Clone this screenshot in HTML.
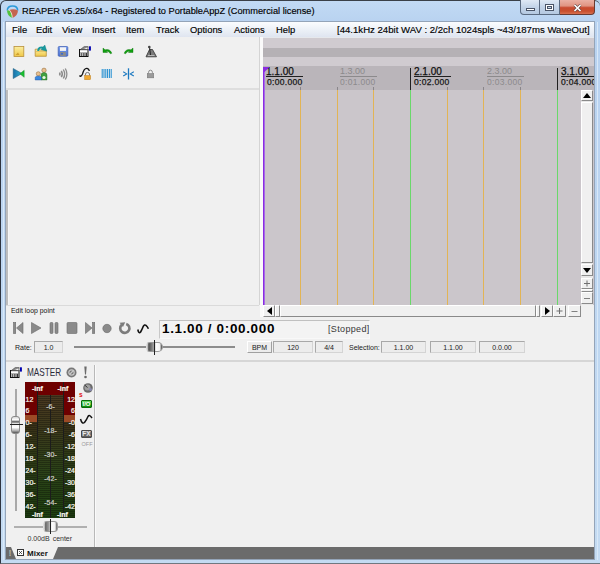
<!DOCTYPE html>
<html><head><meta charset="utf-8">
<style>
*{margin:0;padding:0;box-sizing:border-box}
html,body{width:600px;height:564px;overflow:hidden;background:#b9d1ea;font-family:"Liberation Sans",sans-serif}
.a{position:absolute}
#frame{left:0;top:0;width:600px;height:564px;background:linear-gradient(#c2daf4,#b8d2f0 22px,#c4dbf2);border-left:1px solid #2e3440;border-top:1px solid #3a4048;border-bottom:1px solid #707880;border-radius:6px 6px 0 0}
#ib{left:5px;top:21px;width:590px;height:539px;border:1px solid #94a4b8}
#title{left:22px;top:6px;font-size:9.25px;color:#000;white-space:nowrap;-webkit-text-stroke:0.15px #000}
#menu{left:6px;top:22px;width:588px;height:16px;background:linear-gradient(#fbfcfe,#eef2f8 45%,#dfe5f0);border-bottom:1px solid #e6e8ec}
.mi{position:absolute;top:2px;font-size:9.4px;color:#000;white-space:nowrap;-webkit-text-stroke:0.15px #000}
#status{left:335px;top:22px;width:259px;height:15px}
#tcp{left:6px;top:37px;width:253px;height:268px;background:#f0f0f0}
#arr{left:263px;top:38px;width:331px;height:267px;background:#cbc6cb;overflow:hidden}
.band{position:absolute;left:0;width:331px}
.vl{position:absolute;width:1px}
.rl{position:absolute;font-size:9px;white-space:nowrap;line-height:9px}
.btn{background:#f0f0f0;border-top:1px solid #fff;border-left:1px solid #fff;border-right:1px solid #8a8a8a;border-bottom:1px solid #8a8a8a}
.pm{font-size:10px;line-height:11px;text-align:center;color:#6a6a6a}
.box{border:1px solid #d4d4d4;border-top-color:#a8a8a8;border-left-color:#a8a8a8;background:#ececec;font-size:7px;line-height:11px;text-align:center;color:#202020}
.btn2{border:1px solid #a0a0a0;border-top-color:#fff;border-left-color:#fff;background:#ececec;font-size:7px;line-height:11px;text-align:center;color:#202020}
.ml{position:absolute;font-size:7px;line-height:9px;color:#f8f8f0;white-space:nowrap;-webkit-text-stroke:0.2px #f8f8f0}
.mc{color:#d0d0c8;-webkit-text-stroke:0.2px #d0d0c8}
</style></head><body>
<div id="frame" class="a"></div><div class="a" style="left:3px;top:22px;width:1px;height:538px;background:#d8e8f8"></div><div class="a" style="left:597px;top:22px;width:1px;height:538px;background:#d8e8f8"></div><div id="ib" class="a"></div>
<!-- title bar -->
<svg class="a" style="left:6px;top:4.5px" width="13" height="13" viewBox="0 0 13 13">
 <path d="M1.4 5.6 C1.4 2.3 4 1 6.5 1 C9 1 11.6 2.3 11.6 5.6" stroke="#2c9ad8" stroke-width="1.7" fill="none"/>
 <path d="M1.1 5.4 C1.1 9.6 3.8 12 6.3 12.7 C6 9 5 6.6 3.2 4.9z" fill="#52c23c"/>
 <path d="M3.2 4.9 C6 3.9 9.5 4.1 11.9 5.4 C11.9 9.6 9 12 6.3 12.7 C6 9 5 6.6 3.2 4.9z" fill="#c46450"/>
 <path d="M2.2 5.1 Q2.8 4.8 3.2 4.9 C5 6.6 6 9 6.3 12.5" stroke="#f2eee2" stroke-width="0.8" fill="none"/>
</svg>
<div id="title" class="a">REAPER v5.25/x64 - Registered to PortableAppZ (Commercial license)</div>
<div class="a" style="left:520px;top:0;width:20px;height:15px;border:1px solid #5a6a80;border-top:none;border-radius:0 0 0 4px;background:linear-gradient(#dfe9f5,#c3d4e8 50%,#b5c9e1)"></div>
<div class="a" style="left:526px;top:8px;width:9px;height:3px;background:#fff;border:1px solid #4a5568"></div>
<div class="a" style="left:540px;top:0;width:20px;height:15px;border:1px solid #5a6a80;border-top:none;border-left:none;background:linear-gradient(#dfe9f5,#c3d4e8 50%,#b5c9e1)"></div>
<div class="a" style="left:545px;top:4px;width:9px;height:7px;background:#fff;border:1px solid #4a5568"></div>
<div class="a" style="left:547px;top:6px;width:5px;height:3px;background:#c9d7e8;border:1px solid #4a5568"></div>
<div class="a" style="left:560px;top:0;width:35px;height:15px;border:1px solid #6a3a30;border-top:none;border-left:none;border-radius:0 0 4px 0;background:linear-gradient(#eab0a4,#e09482 42%,#c84a30 55%,#c8502e 80%,#d87050)"></div>
<svg class="a" style="left:572px;top:3px" width="11" height="9" viewBox="0 0 11 9"><path d="M2.5 2 L8.5 8 M8.5 2 L2.5 8" stroke="#5a4040" stroke-width="2.8"/><path d="M2.5 2 L8.5 8 M8.5 2 L2.5 8" stroke="#fff" stroke-width="1.7"/></svg>
<!-- menu -->
<div id="menu" class="a">
<span class="mi" style="left:6px">File</span>
<span class="mi" style="left:30px">Edit</span>
<span class="mi" style="left:56px">View</span>
<span class="mi" style="left:86px">Insert</span>
<span class="mi" style="left:120px">Item</span>
<span class="mi" style="left:150px">Track</span>
<span class="mi" style="left:184px">Options</span>
<span class="mi" style="left:228px">Actions</span>
<span class="mi" style="left:270px">Help</span>
</div>
<div id="status" class="a"><span class="mi" style="left:2px;font-size:9.6px">[44.1kHz 24bit WAV : 2/2ch 1024spls ~43/187ms WaveOut]</span></div>
<!-- TCP -->
<div id="tcp" class="a"></div>
<div class="a" style="left:6px;top:88px;width:253px;height:2px;background:#dedede"></div>
<div class="a" style="left:6px;top:90px;width:2px;height:215px;background:#bdbdbd"></div><div class="a" style="left:8px;top:90px;width:1px;height:215px;background:#f6f6f6"></div>
<div class="a" style="left:259px;top:37px;width:1px;height:268px;background:#d4d4d4"></div>
<div class="a" style="left:260px;top:37px;width:3px;height:268px;background:#fafafa"></div>

<!-- toolbar icons -->
<svg class="a" style="left:0;top:0" width="260" height="90" viewBox="0 0 260 90">
 <defs>
  <linearGradient id="gy" x1="0" y1="0" x2="0" y2="1"><stop offset="0" stop-color="#fbeea0"/><stop offset="1" stop-color="#f0c848"/></linearGradient>
  <linearGradient id="gb" x1="0" y1="0" x2="0" y2="1"><stop offset="0" stop-color="#7aa0f0"/><stop offset="1" stop-color="#4a70d0"/></linearGradient>
  <linearGradient id="gt" x1="0" y1="0" x2="1" y2="0"><stop offset="0" stop-color="#1a70a8"/><stop offset="1" stop-color="#30b0d0"/></linearGradient>
 </defs>
 <!-- new -->
 <rect x="14" y="46.5" width="9.8" height="10" fill="url(#gy)" stroke="#b8903a" stroke-width="0.8"/>
 <path d="M15.5 55 L18 52.5 L19.5 55z" fill="#d0a030"/>
 <!-- open -->
 <path d="M35.2 49.2 H39 L40 50 H46.3 V56.3 H35.2z" fill="url(#gy)" stroke="#b8903a" stroke-width="0.8"/>
 <path d="M35.5 51.5 H46" stroke="#d8b050" stroke-width="0.6"/>
 <path d="M38.2 51 Q38.4 46.2 43.4 47.8" stroke="#189a9e" stroke-width="2" fill="none"/><path d="M44.8 45 L46.8 51.2 L41 49.6z" fill="#189a9e" stroke="#0e7a80" stroke-width="0.4"/>
 <!-- save -->
 <rect x="58.2" y="46.5" width="9.6" height="9.8" rx="1" fill="url(#gb)" stroke="#3a5ab0" stroke-width="0.7"/>
 <rect x="60" y="47.3" width="6" height="3.6" fill="#f4f4f4"/>
 <rect x="60.2" y="52" width="5.6" height="4" fill="#8a8a8a"/>
 <rect x="61" y="53" width="2" height="1.6" fill="#3a6ad0"/>
 <!-- project settings -->
 <g transform="translate(77,45)">
 <rect x="2.5" y="4.5" width="8.5" height="7" fill="#fff" stroke="#111" stroke-width="1"/>
 <path d="M3 4.8 L7.2 1.6 H11.2 L10.8 4.8z" fill="#8a8a8a" stroke="#444" stroke-width="0.6"/>
 <path d="M7 3.6 L10.5 2.6 L10.4 4.2z" fill="#f0f0f0"/>
 <path d="M4.2 8 V11 M6.2 8 V11 M8 8 V11 M9.6 8 V11" stroke="#222" stroke-width="1"/>
 <path d="M3 7.6 H10.5" stroke="#555" stroke-width="0.5"/>
 <rect x="12" y="1.3" width="1.9" height="4.3" fill="#0000b0"/>
 </g>
 <!-- undo -->
 <path d="M103 48 V52.5 H107.5 L106 51 Q108.5 50.8 110.5 53.8 L111.8 53.2 Q110 48.5 105 49.8z" fill="#10a010" stroke="#087008" stroke-width="0.4"/>
 <!-- redo -->
 <path d="M133 48 V52.5 H128.5 L130 51 Q127.5 50.8 125.5 53.8 L124.2 53.2 Q126 48.5 131 49.8z" fill="#10a010" stroke="#087008" stroke-width="0.4"/>
 <!-- metronome -->
 <path d="M146 56.8 L149.5 49.5 H152.5 L156.5 56.8z" fill="#7a7a7a" stroke="#333" stroke-width="0.8"/>
 <path d="M150.5 55 L149.5 47" stroke="#222" stroke-width="1"/>
 <circle cx="149.3" cy="47" r="1.3" fill="#444"/>
 <path d="M148 55.5 H154.5" stroke="#c8c8c8" stroke-width="0.8"/>
 <!-- bowtie -->
 <path d="M13.2 68.5 L22 73.5 L13.2 78.6z" fill="url(#gt)" stroke="#1a5a7a" stroke-width="0.5"/>
 <path d="M24.2 70.3 V77.3 L19.8 73.8z" fill="#18c030" stroke="#0a7a1a" stroke-width="0.4"/>
 <!-- people -->
 <circle cx="44" cy="70.3" r="2.2" fill="#e8c090" stroke="#8a6030" stroke-width="0.5"/>
 <path d="M41 80 V75 Q41 72.5 44 72.5 Q47 72.5 47 75 V80z" fill="#40a040" stroke="#206020" stroke-width="0.4"/>
 <circle cx="44" cy="77.5" r="1.6" fill="#e8f8e0"/>
 <circle cx="38.3" cy="73.8" r="2.1" fill="#e8c090" stroke="#8a6030" stroke-width="0.5"/>
 <path d="M35.2 80 V77.6 Q35.2 76 38.3 76 Q41.4 76 41.4 77.6 V80z" fill="#3a88e0" stroke="#1a4a90" stroke-width="0.4"/>
 <!-- speaker arcs -->
 <g fill="none" stroke="#8c8c8c">
  <path d="M59.5 72.5 Q60.5 74 59.5 75.5" stroke-width="1.6"/>
  <path d="M61.3 70.8 Q63.3 74 61.3 77.2" stroke-width="1.5"/>
  <path d="M63.3 69.5 Q66 74 63.3 78.5" stroke-width="1.4"/>
  <path d="M65.3 68.5 Q68.5 74 65.3 79.5" stroke-width="1.3"/>
 </g>
 <!-- envelope lock -->
 <path d="M79.5 75.5 Q81 77.5 82.5 74 Q84 68 87 68.3 Q89 68.8 89.3 71" stroke="#111" stroke-width="1.3" fill="none"/>
 <path d="M85.5 75.5 V74 Q85.5 72.5 87.5 72.5 Q89.5 72.5 89.5 74 V75.5" stroke="#7a7a7a" stroke-width="1" fill="none"/>
 <rect x="84.6" y="75.5" width="6" height="4.2" fill="#f0a830" stroke="#b07010" stroke-width="0.4"/>
 <!-- grid -->
 <g stroke="#1a8ad0" stroke-width="1">
  <path d="M102.2 69 V78 M104 69 V78 M105.8 69 V78 M107.6 69 V78 M109.4 69 V78 M111.2 69 V78"/>
 </g>
 <!-- ripple -->
 <path d="M128.5 68.3 V79.5" stroke="#1a78c0" stroke-width="1.3"/>
 <path d="M123.2 71.8 L126.7 73.9 L123.2 76" stroke="#1a78c0" stroke-width="1.1" fill="none"/>
 <path d="M133.8 71.8 L130.3 73.9 L133.8 76" stroke="#1a78c0" stroke-width="1.1" fill="none"/>
 <!-- lock gray -->
 <path d="M148.6 73.5 V72.3 Q148.6 70.2 150.5 70.2 Q152.4 70.2 152.4 72.3 V73.5" stroke="#8a8a8a" stroke-width="1" fill="none"/>
 <rect x="147.2" y="73.5" width="6.6" height="4.4" fill="#9a9a9a" stroke="#6a6a6a" stroke-width="0.4"/>
</svg>
<!-- arrange -->
<div id="arr" class="a">
 <div class="band" style="top:0;height:10px;background:#d0cbd0"></div>
 <div class="band" style="top:10px;height:9px;background:#b5b1b5"></div>
 <div class="band" style="top:19px;height:9px;background:#d0cbd0"></div>
 <div class="band" style="top:28px;height:24px;background:#bab5ba"></div>
 <div class="vl" style="left:37px;top:52px;height:215px;background:#e2b455"></div>
 <div class="vl" style="left:74px;top:52px;height:215px;background:#e2b455"></div>
 <div class="vl" style="left:110px;top:52px;height:215px;background:#e2b455"></div>
 <div class="vl" style="left:147px;top:30px;height:22px;background:#202020"></div>
 <div class="vl" style="left:147px;top:52px;height:215px;background:#6ad86a"></div>
 <div class="vl" style="left:184px;top:52px;height:215px;background:#e2b455"></div>
 <div class="vl" style="left:220px;top:52px;height:215px;background:#e2b455"></div>
 <div class="vl" style="left:257px;top:52px;height:215px;background:#e2b455"></div>
 <div class="vl" style="left:294px;top:30px;height:22px;background:#202020"></div>
 <div class="vl" style="left:294px;top:52px;height:215px;background:#6ad86a"></div>
<div class="vl" style="left:37px;top:49px;height:3px;background:#8a868a"></div><div class="vl" style="left:74px;top:49px;height:3px;background:#8a868a"></div><div class="vl" style="left:110px;top:49px;height:3px;background:#8a868a"></div><div class="vl" style="left:184px;top:49px;height:3px;background:#8a868a"></div><div class="vl" style="left:220px;top:49px;height:3px;background:#8a868a"></div><div class="vl" style="left:257px;top:49px;height:3px;background:#8a868a"></div>
 <!-- labels -->
 <div class="rl" style="left:3px;top:29px;font-size:10px;color:#101010;-webkit-text-stroke:0.25px #101010">1.1.00</div>
 <div class="a" style="left:3px;top:38px;width:37px;height:1px;background:#202020"></div>
 <div class="rl" style="left:4px;top:40px;font-size:8.5px;color:#181818;letter-spacing:0.3px;-webkit-text-stroke:0.25px #181818">0:00.000</div>
 <div class="rl" style="left:77px;top:29px;color:#8c8a8c">1.3.00</div>
 <div class="a" style="left:77px;top:38px;width:37px;height:1px;background:#8c8a8c"></div>
 <div class="rl" style="left:77px;top:40px;font-size:8.5px;color:#8c8a8c;letter-spacing:0.3px">0:01.000</div>
 <div class="rl" style="left:151px;top:29px;font-size:10px;color:#101010;-webkit-text-stroke:0.25px #101010">2.1.00</div>
 <div class="a" style="left:151px;top:38px;width:37px;height:1px;background:#202020"></div>
 <div class="rl" style="left:151px;top:40px;font-size:8.5px;color:#181818;letter-spacing:0.3px;-webkit-text-stroke:0.25px #181818">0:02.000</div>
 <div class="rl" style="left:224px;top:29px;color:#8c8a8c">2.3.00</div>
 <div class="a" style="left:224px;top:38px;width:37px;height:1px;background:#8c8a8c"></div>
 <div class="rl" style="left:224px;top:40px;font-size:8.5px;color:#8c8a8c;letter-spacing:0.3px">0:03.000</div>
 <div class="rl" style="left:298px;top:29px;font-size:10px;color:#101010;-webkit-text-stroke:0.25px #101010">3.1.00</div>
 <div class="a" style="left:298px;top:38px;width:37px;height:1px;background:#202020"></div>
 <div class="rl" style="left:298px;top:40px;font-size:8.5px;color:#181818;letter-spacing:0.3px;-webkit-text-stroke:0.25px #181818">0:04.000</div>
 <!-- cursor -->
 <div class="vl" style="left:0;top:29px;width:1px;height:238px;background:#8a2be2"></div><div class="vl" style="left:1px;top:29px;width:1px;height:238px;background:#a66ae8"></div>
 <svg class="a" style="left:0;top:29px" width="7" height="7"><path d="M0 0H6.5L0 6.5z" fill="#8a2be2"/></svg>
</div>

<!-- vertical scrollbar -->
<div class="a" style="left:581px;top:90px;width:12px;height:215px;background:#e8e8e8"></div>
<div class="a btn" style="left:581px;top:90px;width:12px;height:11px"></div>
<svg class="a" style="left:583px;top:93px" width="8" height="5"><path d="M4 0L8 5H0z" fill="#000"/></svg>
<div class="a btn" style="left:581px;top:102px;width:12px;height:161px"></div>
<div class="a btn" style="left:581px;top:264px;width:12px;height:12px"></div>
<svg class="a" style="left:583px;top:268px" width="8" height="5"><path d="M0 0H8L4 5z" fill="#000"/></svg>
<div class="a btn" style="left:581px;top:278px;width:12px;height:11px"></div>
<svg class="a" style="left:581px;top:278px" width="12" height="11"><path d="M6 2.5V8.5M3 5.5H9" stroke="#707070" stroke-width="1"/></svg>
<div class="a btn" style="left:581px;top:292px;width:12px;height:12px"></div>
<div class="a btn" style="left:581px;top:289px;width:12px;height:3px"></div><svg class="a" style="left:581px;top:292px" width="12" height="12"><path d="M3 6.5H9" stroke="#808080" stroke-width="1"/></svg>
<!-- horizontal scrollbar -->
<div class="a" style="left:263px;top:305px;width:331px;height:12px;background:#f0f0f0"></div>
<div class="a btn" style="left:263px;top:305px;width:12px;height:12px"></div>
<svg class="a" style="left:267px;top:307px" width="5" height="8"><path d="M5 0V8L0 4z" fill="#000"/></svg>
<div class="a btn" style="left:275px;top:305px;width:5px;height:12px"></div>
<div class="a btn" style="left:280px;top:305px;width:256px;height:12px"></div>
<div class="a btn" style="left:536px;top:305px;width:4px;height:12px"></div>
<div class="a btn" style="left:541px;top:305px;width:12px;height:12px"></div>
<svg class="a" style="left:545px;top:307px" width="5" height="8"><path d="M0 0V8L5 4z" fill="#000"/></svg>
<div class="a btn" style="left:553px;top:305px;width:13px;height:12px"></div>
<svg class="a" style="left:553px;top:305px" width="13" height="12"><path d="M6.5 3V9M3.5 6H9.5" stroke="#707070" stroke-width="1"/></svg>
<div class="a btn" style="left:568px;top:305px;width:13px;height:12px"></div>
<svg class="a" style="left:568px;top:305px" width="13" height="12"><path d="M3.5 6.5H9.5" stroke="#808080" stroke-width="1"/></svg>
<!-- transport -->
<div class="a" style="left:6px;top:305px;width:257px;height:56px;background:#f0f0f0"></div>
<div class="a" style="left:260px;top:305px;width:3px;height:12px;background:#fafafa"></div>
<div class="a" style="left:6px;top:317px;width:588px;height:44px;background:#f0f0f0"></div>
<div class="a" style="left:6px;top:305px;width:253px;height:1px;background:#dadada"></div>
<div class="a" style="left:11px;top:307px;font-size:6.9px;color:#101010;white-space:nowrap">Edit loop point</div>
<svg class="a" style="left:12px;top:321px" width="140" height="15" viewBox="0 0 140 15">
 <g fill="#8a8a8a" stroke="#6a6a6a" stroke-width="0.6">
  <rect x="1.5" y="1.5" width="2.2" height="11"/><path d="M11 1.5V12.5L4.5 7z"/>
  <path d="M19.5 1.5L29 7L19.5 12.5z"/>
  <rect x="38" y="1.5" width="3" height="11" rx="1"/><rect x="43" y="1.5" width="3" height="11" rx="1"/>
  <rect x="55" y="1.5" width="10" height="11" rx="1"/>
  <path d="M73.5 1.5V12.5L80 7z"/><rect x="80.5" y="1.5" width="2.2" height="11"/>
  <circle cx="95" cy="7.5" r="4.2"/>
 </g>
 <path d="M109.8 3.8 A4.6 4.6 0 1 0 114.2 2.9" stroke="#7c7c7c" stroke-width="2.6" fill="none"/>
 <path d="M107.6 1.8L113.2 1.2L111 6z" fill="#7c7c7c"/>
 <path d="M125.8 8.5 Q126.8 13.2 128.6 11 Q130 8.5 131.2 5.5 Q132.5 3.2 134 4.3 Q135.5 5.5 136.4 7.8" stroke="#111" stroke-width="1.6" fill="none"/>
</svg>
<div class="a" style="left:159px;top:320px;width:211px;height:19px;background:#f3f3f3;border-top:1px solid #c0c0c0;border-left:1px solid #c8c8c8;border-bottom:1px solid #f8f8f8;border-right:1px solid #f8f8f8"></div>
<div class="a" style="left:162px;top:322px;font-size:12px;font-weight:bold;color:#000;white-space:nowrap;line-height:14px;letter-spacing:0.6px;transform:scaleX(1.12);transform-origin:0 0">1.1.00 / 0:00.000</div>
<div class="a" style="left:328px;top:324px;font-size:9px;color:#383838;white-space:nowrap;letter-spacing:0.35px">[Stopped]</div>
<div class="a" style="left:15px;top:344px;font-size:7px;color:#202020">Rate:</div>
<div class="a box" style="left:34px;top:341px;width:29px;height:12px">1.0</div>
<div class="a" style="left:74px;top:346px;width:161px;height:2px;background:#8c8c8c"></div>
<div class="a" style="left:146px;top:342px;width:17px;height:10px;border-radius:4px 5px 5px 4px;background:linear-gradient(90deg,#e8e8e8 0,#505050 12%,#7a7a7a 30%,#b0b0b0 50%,#fff 60%,#f4f4f4 85%,#404040 100%);border:1px solid #9a9a9a;border-left-color:#ddd"></div>
<div class="a" style="left:154px;top:340px;width:1px;height:15px;background:#222"></div>
<div class="a btn2" style="left:247px;top:341px;width:25px;height:12px">BPM</div>
<div class="a box" style="left:273px;top:341px;width:40px;height:12px">120</div>
<div class="a box" style="left:315px;top:341px;width:28px;height:12px">4/4</div>
<div class="a" style="left:349px;top:344px;font-size:7px;color:#202020">Selection:</div>
<div class="a box" style="left:381px;top:341px;width:45px;height:12px">1.1.00</div>
<div class="a box" style="left:430px;top:341px;width:46px;height:12px">1.1.00</div>
<div class="a box" style="left:479px;top:341px;width:46px;height:12px">0.0.00</div>
<!-- mixer -->
<div class="a" style="left:6px;top:362px;width:588px;height:185px;background:#f0f0f0"></div>
<div class="a" style="left:6px;top:360px;width:588px;height:2px;background:#d6d6d6"></div>

<div class="a" style="left:94px;top:365px;width:1px;height:182px;background:#b8b8b8"></div>
<div class="a" style="left:95px;top:365px;width:1px;height:182px;background:#fafafa"></div>
<svg class="a" style="left:8px;top:366px" width="14" height="13" viewBox="0 0 14 13">
 <rect x="2.5" y="4.5" width="8.5" height="7" fill="#fff" stroke="#111" stroke-width="1"/>
 <path d="M3 4.8 L7.2 1.6 H11.2 L10.8 4.8z" fill="#8a8a8a" stroke="#444" stroke-width="0.6"/>
 <path d="M7 3.6 L10.5 2.6 L10.4 4.2z" fill="#f0f0f0"/>
 <path d="M4.2 8 V11 M6.2 8 V11 M8 8 V11 M9.6 8 V11" stroke="#222" stroke-width="1"/>
 <path d="M3 7.6 H10.5" stroke="#555" stroke-width="0.5"/>
 <rect x="12" y="1.3" width="1.9" height="4.3" fill="#0000b0"/>
</svg>
<div class="a" style="left:27px;top:366px;font-size:10.5px;color:#2a2a3a;white-space:nowrap;transform:scaleX(0.78);transform-origin:0 0;line-height:12px">MASTER</div>
<svg class="a" style="left:66px;top:367px" width="11" height="11" viewBox="0 0 11 11"><circle cx="5.5" cy="5.5" r="5" fill="#787878"/><circle cx="5.5" cy="5.5" r="2.7" fill="none" stroke="#c8c8c8" stroke-width="1.2"/><path d="M3.5 7.5L7.5 3.5" stroke="#c8c8c8" stroke-width="1.2"/></svg>
<svg class="a" style="left:83px;top:366px" width="5" height="13" viewBox="0 0 5 13"><path d="M1.3 0.5H3.7L3 8.5H2z" fill="#6a6a6a"/><circle cx="2.5" cy="11" r="1.3" fill="#6a6a6a"/></svg>
<!-- fader -->
<div class="a" style="left:15px;top:389px;width:2px;height:122px;background:#a8a8a8"></div>
<div class="a" style="left:11px;top:416px;width:9px;height:18px;border:1px solid #8a8a8a;border-radius:3px;background:linear-gradient(#d8d8d8,#fff 18%,#5a5a5a 30%,#f0f0f0 42%,#fff 65%,#b0b0b0 85%,#555)"></div>
<div class="a" style="left:10px;top:424px;width:13px;height:1px;background:#222"></div>
<!-- meter -->
<div class="a" style="left:25px;top:382px;width:50px;height:136px;background:linear-gradient(#6e0000 0,#6e0000 33px,#9c4a26 33px,#9c4a26 40px,#3a3018 40px,#2e3a16 75px,#1c3a10 136px)"></div>
<div class="a" style="left:25px;top:422px;width:50px;height:96px;background:repeating-linear-gradient(rgba(0,0,0,0) 0 1px,rgba(0,0,0,0.22) 1px 2px)"></div>
<div class="a" style="left:37px;top:395px;width:26px;height:123px;background:repeating-linear-gradient(rgba(0,0,0,0) 0 1px,rgba(0,0,0,0.28) 1px 2px),linear-gradient(#4a3820,#3c3a1c 35px,#2c4218 75px,#1e4010)"></div>
<div class="a" style="left:25px;top:382px;width:50px;height:13px;background:#6e0000"></div>
<div class="a" style="left:37px;top:382px;width:1px;height:136px;background:#1c1c1c"></div>
<div class="a" style="left:50px;top:395px;width:1px;height:123px;background:#1c1c1c"></div>
<div class="a" style="left:63px;top:382px;width:1px;height:136px;background:#1c1c1c"></div>
<div class="ml" style="left:32px;top:384px;font-weight:bold">-inf</div>
<div class="ml" style="left:57.5px;top:384px;font-weight:bold">-inf</div>
<div class="ml" style="left:32px;top:510px;font-weight:bold">-inf</div>
<div class="ml" style="left:57px;top:510px;font-weight:bold">-inf</div>
<div class="ml" style="left:25.5px;top:394.5px">12</div>
<div class="ml" style="left:25.5px;top:406.0px">6</div>
<div class="ml" style="left:25.5px;top:417.5px">0-</div>
<div class="ml" style="left:25.5px;top:429.5px">6-</div>
<div class="ml" style="left:25.5px;top:441.5px">12-</div>
<div class="ml" style="left:25.5px;top:453.5px">18-</div>
<div class="ml" style="left:25.5px;top:465.5px">24-</div>
<div class="ml" style="left:25.5px;top:477.5px">30-</div>
<div class="ml" style="left:25.5px;top:489.5px">36-</div>
<div class="ml" style="left:25.5px;top:501.5px">42-</div>
<div class="ml" style="right:525px;top:394.5px;text-align:right">12</div>
<div class="ml" style="right:525px;top:406.0px;text-align:right">6</div>
<div class="ml" style="right:525px;top:417.5px;text-align:right">-0</div>
<div class="ml" style="right:525px;top:429.5px;text-align:right">-6</div>
<div class="ml" style="right:525px;top:441.5px;text-align:right">-12</div>
<div class="ml" style="right:525px;top:453.5px;text-align:right">-18</div>
<div class="ml" style="right:525px;top:465.5px;text-align:right">-24</div>
<div class="ml" style="right:525px;top:477.5px;text-align:right">-30</div>
<div class="ml" style="right:525px;top:489.5px;text-align:right">-36</div>
<div class="ml" style="right:525px;top:501.5px;text-align:right">-42</div>
<div class="ml mc" style="left:38px;width:25px;top:401.5px;text-align:center">-6-</div>
<div class="ml mc" style="left:38px;width:25px;top:426.0px;text-align:center">-18-</div>
<div class="ml mc" style="left:38px;width:25px;top:450.0px;text-align:center">-30-</div>
<div class="ml mc" style="left:38px;width:25px;top:474.0px;text-align:center">-42-</div>
<div class="ml mc" style="left:38px;width:25px;top:498.0px;text-align:center">-54-</div>
<!-- strip buttons -->
<svg class="a" style="left:80px;top:383px" width="14" height="12" viewBox="0 0 14 12"><circle cx="8" cy="5" r="4.8" fill="#6a6a6a"/><circle cx="7.5" cy="4.5" r="3" fill="#a0a0a0"/><path d="M7.5 4.5L4.8 2.2" stroke="#333" stroke-width="1"/><circle cx="10.5" cy="6.5" r="1.5" fill="#8a8ab0"/></svg>
<div class="a" style="left:81px;top:400px;width:11px;height:8px;background:linear-gradient(#70e070,#18a818 60%,#0c8a0c);border:1px solid #0a6a0a;border-radius:1px;font-size:6px;line-height:6px;font-weight:bold;color:#fff;text-align:center">I/O</div>
<svg class="a" style="left:79px;top:413px" width="14" height="12" viewBox="0 0 14 12"><path d="M1.5 6 Q3 11.5 5.5 9.5 Q7.5 7 9 3.5 Q10.5 1 13 5" stroke="#111" stroke-width="1.5" fill="none"/></svg>
<div class="a" style="left:81px;top:430px;width:11px;height:8px;background:linear-gradient(#8a8a8a,#5a5a5a);border:1px solid #4a4a4a;border-radius:1px;font-size:6.5px;line-height:6px;font-weight:bold;color:#e8e8e8;text-align:center">FX</div>
<div class="a" style="left:81.5px;top:440.5px;font-size:5.5px;color:#9a9a9a">OFF</div>
<div class="a" style="left:79px;top:391px;font-size:6.5px;line-height:7px;font-weight:bold;color:#e01010">s</div>
<!-- pan -->
<div class="a" style="left:14px;top:526px;width:73px;height:2px;background:#b0b0b0"></div>
<div class="a" style="left:43px;top:521px;width:15px;height:11px;border-radius:4px;background:linear-gradient(90deg,#e8e8e8 0,#6a6a6a 12%,#9a9a9a 35%,#d0d0d0 50%,#fff 60%,#f0f0f0 85%,#555 100%);border:1px solid #9a9a9a;border-left-color:#ddd"></div>
<div class="a" style="left:50px;top:519px;width:1px;height:15px;background:#222"></div>
<div class="a" style="left:27.5px;top:535px;font-size:7px;color:#333;white-space:nowrap;word-spacing:1px">0.00dB center</div>
<!-- tab bar -->
<div class="a" style="left:6px;top:547px;width:588px;height:12px;background:#6b6b6b"></div>
<svg class="a" style="left:11px;top:547px" width="50" height="12"><path d="M0 0H47L42 12H5z" fill="#f0f0f0"/></svg>
<div class="a" style="left:8.5px;top:548px;font-size:9px;line-height:10px;font-weight:bold;color:#b4b4a8">!</div>
<div class="a" style="left:17px;top:549px;width:7px;height:7px;border:1px solid #333;background:#fff"></div>
<svg class="a" style="left:19px;top:551px" width="3" height="3"><path d="M0 0L3 3M3 0L0 3" stroke="#333" stroke-width="0.8"/></svg>
<div class="a" style="left:27px;top:548.5px;font-size:8px;line-height:9px;font-weight:bold;color:#111">Mixer</div>
</body></html>
